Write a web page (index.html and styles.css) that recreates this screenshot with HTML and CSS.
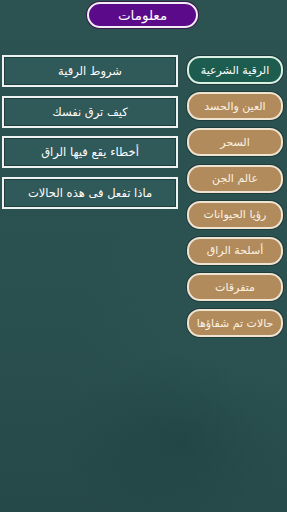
FILE: index.html
```html
<!DOCTYPE html>
<html lang="ar" dir="rtl">
<head>
<meta charset="utf-8">
<link rel="stylesheet" href="styles.css">
</head>
<body>
<div class="screen">
  <header class="top">
    <div class="title">معلومات</div>
  </header>
  <main class="content">
    <nav class="tabs">
      <div class="pill active">الرقية الشرعية</div>
      <div class="pill">العين والحسد</div>
      <div class="pill">السحر</div>
      <div class="pill">عالم الجن</div>
      <div class="pill">رؤيا الحيوانات</div>
      <div class="pill">أسلحة الراق</div>
      <div class="pill">متفرقات</div>
      <div class="pill">حالات تم شفاؤها</div>
    </nav>
    <section class="items">
      <div class="box">شروط الرقية</div>
      <div class="box">كيف ترق نفسك</div>
      <div class="box">أخطاء يقع فيها الراق</div>
      <div class="box">ماذا تفعل فى هذه الحالات</div>
    </section>
  </main>
</div>
</body>
</html>
```
FILE: styles.css
```css
html, body {
  margin: 0;
  padding: 0;
}
body {
  width: 287px;
  height: 512px;
  overflow: hidden;
  font-family: "DejaVu Sans", "Noto Sans", sans-serif;
}
.screen {
  width: 287px;
  height: 512px;
  background:
    radial-gradient(ellipse 120px 90px at 180px 440px, rgba(20,55,55,0.35), transparent),
    radial-gradient(ellipse 160px 200px at 230px 380px, rgba(60,105,105,0.18), transparent),
    linear-gradient(180deg, #2c5352 0%, #2a5150 50%, #254948 100%);
  display: flex;
  flex-direction: column;
}
.top {
  display: flex;
  justify-content: center;
  padding-top: 2px;
  padding-right: 2px;
}
.title {
  width: 107px;
  height: 22px;
  border: 2px solid #f2eef6;
  border-radius: 14px;
  background: #5b0b8a;
  color: #ffffff;
  font-size: 13.5px;
  display: flex;
  align-items: center;
  justify-content: center;
  box-shadow: 0 0 0 1px #3a1a4a;
}
.content {
  display: flex;
  flex-direction: row;
  justify-content: space-between;
  padding: 27px 4px 0 2px;
}
.tabs {
  width: 96px;
  display: flex;
  flex-direction: column;
  gap: 8.2px;
  padding-top: 1px;
}
.pill {
  height: 24px;
  border: 2px solid #efe4d2;
  border-radius: 13px;
  background: #b28b5c;
  color: #fbf3e4;
  font-size: 11px;
  display: flex;
  align-items: center;
  justify-content: center;
  box-shadow: 0 0 0 1px #1f3b3a;
}
.pill.active {
  background: #1d5d50;
  border-color: #d9f0e3;
  color: #ffffff;
}
.items {
  width: 176px;
  display: flex;
  flex-direction: column;
  gap: 8.5px;
}
.box {
  height: 28px;
  border: 2px solid #eef2f1;
  background: #30595a;
  color: #ffffff;
  font-size: 11.5px;
  display: flex;
  align-items: center;
  justify-content: center;
  box-shadow: inset 0 0 0 1px #1f3f3f;
}
```
